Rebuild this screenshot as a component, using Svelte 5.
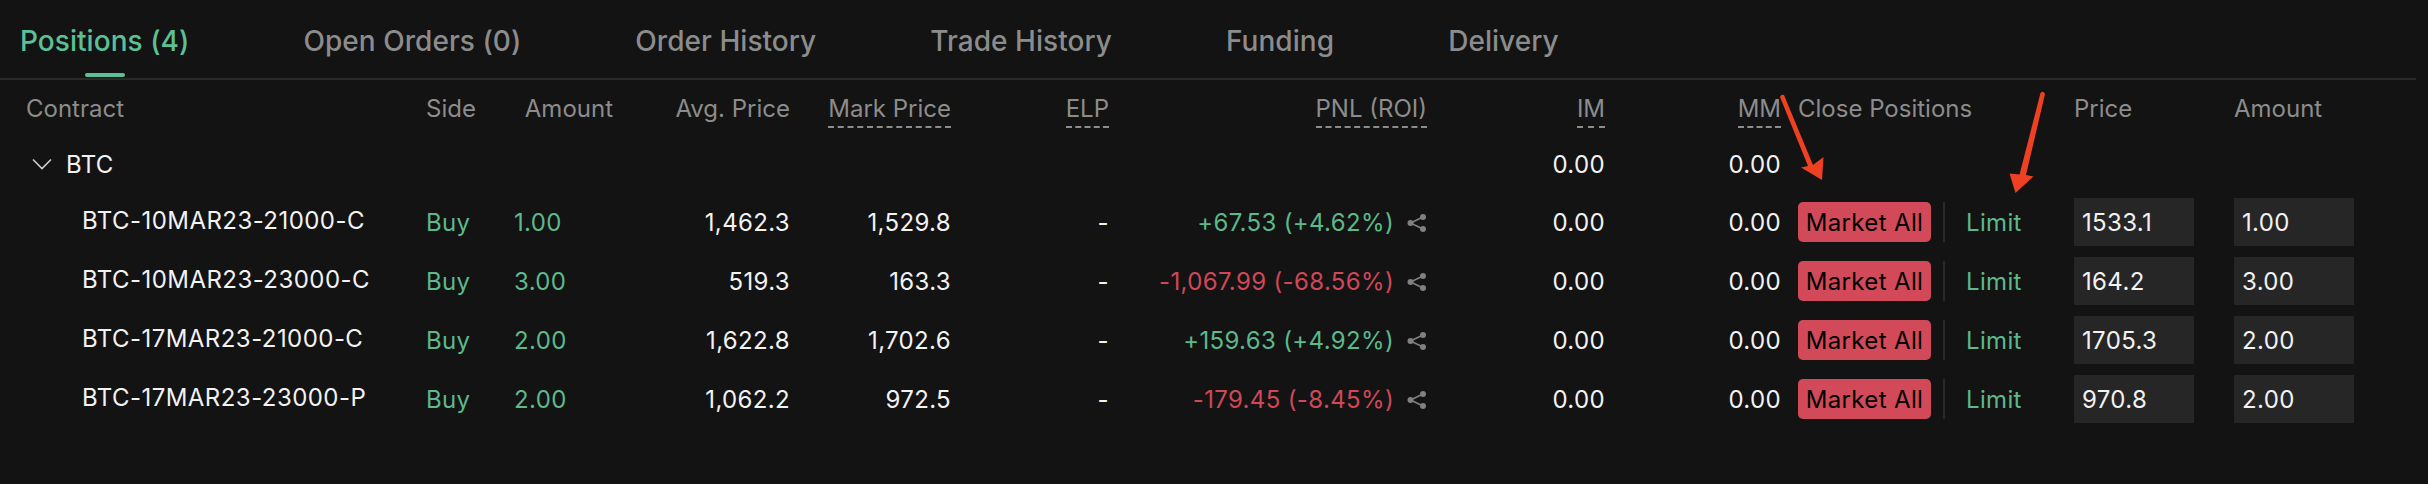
<script>
  const tabs = ['Positions (4)', 'Open Orders (0)', 'Order History', 'Trade History', 'Funding', 'Delivery'];

  const positions = [
    { contract: 'BTC-10MAR23-21000-C', amount: '1.00', avg: '1,462.3', mark: '1,529.8', pnl: '+67.53 (+4.62%)', up: true, price: '1533.1' },
    { contract: 'BTC-10MAR23-23000-C', amount: '3.00', avg: '519.3', mark: '163.3', pnl: '-1,067.99 (-68.56%)', up: false, price: '164.2' },
    { contract: 'BTC-17MAR23-21000-C', amount: '2.00', avg: '1,622.8', mark: '1,702.6', pnl: '+159.63 (+4.92%)', up: true, price: '1705.3' },
    { contract: 'BTC-17MAR23-23000-P', amount: '2.00', avg: '1,062.2', mark: '972.5', pnl: '-179.45 (-8.45%)', up: false, price: '970.8' }
  ];
</script>

<div class="page">
  <nav class="tabs">
    {#each tabs as tab, i}
      <span class="tab" class:active={i === 0}>{tab}</span>
    {/each}
  </nav>

  <div class="row head">
    <span>Contract</span>
    <span>Side</span>
    <span class="right">Amount</span>
    <span class="right">Avg. Price</span>
    <span class="right"><u>Mark Price</u></span>
    <span class="right"><u>ELP</u></span>
    <span class="right"><u>PNL (ROI)</u></span>
    <span class="right"><u>IM</u></span>
    <span class="right"><u>MM</u></span>
    <span class="spacer"></span>
    <span>Close Positions</span>
    <span>Price</span>
    <span>Amount</span>
  </div>

  <div class="row group">
    <span class="group-name">
      <svg width="20" height="12" viewBox="0 0 20 12" fill="none">
        <path d="M1 1.5 L10 10.5 L19 1.5" stroke="#d0d0d0" stroke-width="1.6" />
      </svg>
      BTC
    </span>
    <span></span>
    <span></span>
    <span></span>
    <span></span>
    <span></span>
    <span></span>
    <span class="right">0.00</span>
    <span class="right">0.00</span>
  </div>

  <div class="list">
    {#each positions as p}
      <div class="row item">
        <span class="contract">{p.contract}</span>
        <span class="green">Buy</span>
        <span class="green">{p.amount}</span>
        <span class="right">{p.avg}</span>
        <span class="right">{p.mark}</span>
        <span class="right">-</span>
        <span class="pnl" class:green={p.up} class:red={!p.up}>
          {p.pnl}
          <svg width="20" height="18" viewBox="0 0 20 18" fill="#808080" stroke="#808080">
            <path d="M3.5 9 L16 3 M3.5 9 L16 15" stroke-width="1.5" />
            <circle cx="3.5" cy="9" r="3" stroke="none" />
            <circle cx="16" cy="3" r="3" stroke="none" />
            <circle cx="16" cy="15" r="3" stroke="none" />
          </svg>
        </span>
        <span class="right">0.00</span>
        <span class="right">0.00</span>
        <span class="spacer"></span>
        <span class="close">
          <button class="market">Market All</button>
          <span class="sep"></span>
          <span class="green limit">Limit</span>
        </span>
        <span class="field">{p.price}</span>
        <span class="field">{p.amount}</span>
      </div>
    {/each}
  </div>

  <svg class="arrows" width="2428" height="484" viewBox="0 0 2428 484">
    <path d="M1780 97 Q1781 94 1784 95 L1813 165 L1823.5 157 L1822 180 L1801 167.5 L1808 166 Z" fill="#ee4023" />
    <path d="M2040.5 93 Q2043 90 2045 94 L2026 175 L2033.5 176.5 L2015.5 193 L2009.5 173.5 L2019.5 174.5 Z" fill="#ee4023" />
  </svg>
</div>

<style>
  :global(body) {
    margin: 0;
    background: #131313;
  }

  .page {
    position: relative;
    width: 2428px;
    height: 484px;
    overflow: hidden;
    background: #131313;
    color: #f2f2f2;
    font-family: Inter, "Liberation Sans", sans-serif;
    font-size: 24px;
    letter-spacing: 0.35px;
  }

  .tabs {
    display: flex;
    gap: 114px;
    align-items: center;
    width: 2396px;
    height: 78px;
    padding: 0 0 0 20px;
    border-bottom: 2px solid #2a2a2a;
  }

  .tab {
    position: relative;
    font-size: 28px;
    font-weight: 500;
    letter-spacing: 0.05px;
    color: #8c8c8c;
    margin-top: 4px;
  }

  .tab.active {
    color: #5cc096;
  }

  .tab.active::after {
    content: '';
    position: absolute;
    left: 50%;
    bottom: -19px;
    width: 40px;
    height: 4px;
    margin-left: -20px;
    border-radius: 2px;
    background: #5cc096;
  }

  .row {
    display: grid;
    grid-template-columns: 400px 88px 99px 177px 161px 158px 318px 178px 176px 17px 276px 160px 120px;
    align-items: center;
    padding-left: 26px;
  }

  .head {
    height: 56px;
    color: #8c8c8c;
    letter-spacing: 0;
  }

  .head u {
    text-decoration: none;
    border-bottom: 2px dashed #8c8c8c;
    padding-bottom: 3px;
  }

  .group {
    height: 56px;
  }

  .group-name {
    display: flex;
    align-items: center;
    gap: 14px;
    padding-left: 6px;
  }

  .list {
    display: flex;
    flex-direction: column;
    gap: 11px;
    padding-top: 6px;
  }

  .item {
    height: 48px;
  }

  .contract {
    padding: 0 0 4px 56px;
    letter-spacing: 0.45px;
  }

  .right {
    text-align: right;
  }

  .green {
    color: #5bb98c;
  }

  .red {
    color: #d04757;
  }

  .pnl {
    display: flex;
    align-items: center;
    justify-content: flex-end;
    gap: 13px;
  }

  .pnl svg {
    margin-top: 2px;
  }

  .close {
    display: flex;
    align-items: center;
  }

  .market {
    width: 133px;
    height: 40px;
    padding: 0;
    border: none;
    border-radius: 5px;
    background: #d24a59;
    color: #000;
    font: inherit;
    letter-spacing: inherit;
  }

  .sep {
    width: 2px;
    height: 40px;
    margin: 0 21px 0 12px;
    background: #2a2a2a;
  }

  .field {
    display: flex;
    align-items: center;
    width: 112px;
    height: 48px;
    padding-left: 8px;
    background: #262626;
  }

  .arrows {
    position: absolute;
    left: 0;
    top: 0;
    pointer-events: none;
  }
</style>
